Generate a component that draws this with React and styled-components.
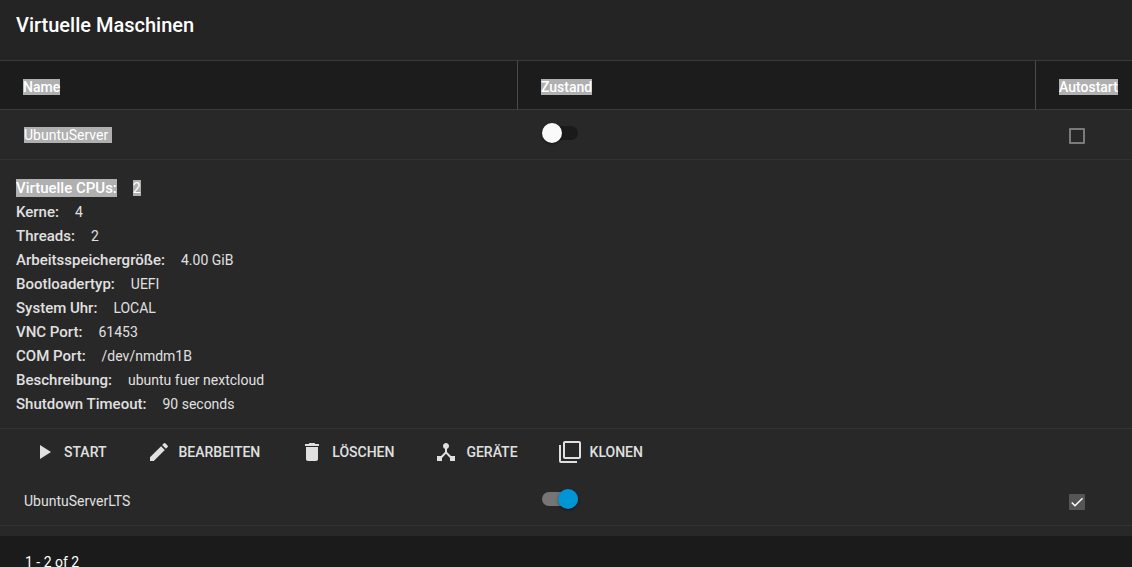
import React, { useState } from "react";
import styled, { createGlobalStyle } from "styled-components";
import { MdPlayArrow, MdEdit, MdDelete, MdDeviceHub, MdFilterNone } from "react-icons/md";

const vms = [
  {
    name: "UbuntuServer",
    running: false,
    autostart: false,
    expanded: true,
    selected: true,
    details: [
      ["Virtuelle CPUs:", "2"],
      ["Kerne:", "4"],
      ["Threads:", "2"],
      ["Arbeitsspeichergröße:", "4.00 GiB"],
      ["Bootloadertyp:", "UEFI"],
      ["System Uhr:", "LOCAL"],
      ["VNC Port:", "61453"],
      ["COM Port:", "/dev/nmdm1B"],
      ["Beschreibung:", "ubuntu fuer nextcloud"],
      ["Shutdown Timeout:", "90 seconds"],
    ],
  },
  { name: "UbuntuServerLTS", running: true, autostart: true, details: [] },
];

const actions = [
  { label: "START", icon: MdPlayArrow },
  { label: "BEARBEITEN", icon: MdEdit },
  { label: "LÖSCHEN", icon: MdDelete },
  { label: "GERÄTE", icon: MdDeviceHub },
  { label: "KLONEN", icon: MdFilterNone },
];

const VmRow = ({ vm }) => {
  const [running, setRunning] = useState(vm.running);
  const [autostart, setAutostart] = useState(vm.autostart);

  return (
    <>
      <tr>
        <Cell>
          <Text $selected={vm.selected}>{vm.selected ? vm.name + " " : vm.name}</Text>
        </Cell>
        <Cell>
          <Switch
            type="checkbox"
            role="switch"
            aria-label={"Zustand " + vm.name}
            checked={running}
            onChange={() => setRunning(!running)}
          />
        </Cell>
        <Cell $check>
          <CheckLabel>
            <Checkbox
              type="checkbox"
              aria-label={"Autostart " + vm.name}
              checked={autostart}
              onChange={() => setAutostart(!autostart)}
            />
            {autostart && (
              <CheckMark viewBox="0 0 24 24" aria-hidden="true">
                <path d="M4.1 12.7 9 17.6 20.3 6.3" />
              </CheckMark>
            )}
          </CheckLabel>
        </Cell>
      </tr>
      {vm.expanded && (
        <tr>
          <DetailCell colSpan={3}>
            <Details>
              {vm.details.map(([label, value], i) => (
                <Detail key={label}>
                  <dt>
                    <Text $selected={i === 0}>{label}</Text>
                  </dt>
                  <dd>
                    <Text $selected={i === 0}>{value}</Text>
                  </dd>
                </Detail>
              ))}
            </Details>
            <Actions>
              {actions.map(({ label, icon: Icon }) => (
                <ActionButton key={label} type="button">
                  <Icon size={24} />
                  {label}
                </ActionButton>
              ))}
            </Actions>
          </DetailCell>
        </tr>
      )}
    </>
  );
};

const App = () => {
  return (
    <Page>
      <GlobalStyle />
      <TitleBar>
        <h1>Virtuelle Maschinen</h1>
      </TitleBar>
      <Table>
        <colgroup>
          <col />
          <col />
          <AutostartCol />
        </colgroup>
        <thead>
          <tr>
            {["Name", "Zustand", "Autostart"].map((title) => (
              <HeadCell key={title} scope="col">
                <Text $selected>{title}</Text>
              </HeadCell>
            ))}
          </tr>
        </thead>
        <tbody>
          {vms.map((vm) => (
            <VmRow key={vm.name} vm={vm} />
          ))}
        </tbody>
      </Table>
      <Footer>1 - 2 of 2</Footer>
    </Page>
  );
};

export default App;

const GlobalStyle = createGlobalStyle`
  * {
    box-sizing: border-box;
  }
  body {
    margin: 0;
    background: #282828;
    color: #e0e0e0;
    font-family: Roboto, sans-serif;
    font-size: 14px;
  }
`;

const Page = styled.div`
  display: flex;
  flex-direction: column;
  height: 100vh;
  overflow: hidden;
`;

const TitleBar = styled.header`
  flex: none;
  padding: 13px 16px 23px;
  background: #242424;

  h1 {
    margin: 0;
    color: #fff;
    font-size: 20px;
    font-weight: 500;
    line-height: 24px;
  }
`;

const Table = styled.table`
  flex: none;
  width: 100%;
  margin-bottom: 10px;
  table-layout: fixed;
  border-collapse: separate;
  border-spacing: 0;
`;

const AutostartCol = styled.col`
  width: 96px;
`;

const HeadCell = styled.th`
  height: 50px;
  padding: 4px 0 0 23px;
  background: #1c1c1c;
  border-top: 1px solid #393939;
  border-bottom: 1px solid #393939;
  font-weight: 500;
  line-height: 16px;
  text-align: left;

  &:not(:last-child) {
    border-right: 1px solid #4a4a4a;
  }
`;

const Cell = styled.td`
  height: 50px;
  padding: ${(props) => (props.$check ? "2px 0 0 33px" : "0 0 0 24px")};
  border-bottom: 1px solid #323232;
  line-height: 16px;
  vertical-align: middle;
`;

const Text = styled.span`
  white-space: pre;
  color: ${(props) => (props.$selected ? "#fff" : "inherit")};
  background: ${(props) => (props.$selected ? "#b0b0b0" : "transparent")};
`;

const Switch = styled.input`
  appearance: none;
  display: flex;
  align-items: center;
  width: 36px;
  height: 14px;
  margin: 0 0 3px;
  border-radius: 7px;
  background: ${(props) => (props.checked ? "#757575" : "#1a1a1a")};
  cursor: pointer;

  &::before {
    content: "";
    flex: none;
    width: 20px;
    height: 20px;
    margin-left: ${(props) => (props.checked ? "16px" : "0")};
    border-radius: 50%;
    background: ${(props) => (props.checked ? "#0095d5" : "#fafafa")};
    box-shadow: 0 1px 3px rgba(0, 0, 0, 0.4);
  }
`;

const CheckLabel = styled.label`
  display: grid;
  width: 16px;
  height: 16px;

  & > * {
    grid-area: 1 / 1;
  }
`;

const Checkbox = styled.input`
  appearance: none;
  width: 16px;
  height: 16px;
  margin: 0;
  border: 2px solid ${(props) => (props.checked ? "#555" : "#7a7a7a")};
  border-radius: 1px;
  background: ${(props) => (props.checked ? "#555" : "transparent")};
`;

const CheckMark = styled.svg`
  width: 16px;
  height: 16px;
  fill: none;
  stroke: #fff;
  stroke-width: 2.2;
  pointer-events: none;
`;

const DetailCell = styled.td`
  padding: 0;
`;

const Details = styled.dl`
  margin: 0;
  padding: 16px 16px 12px;
  border-bottom: 1px solid #323232;
`;

const Detail = styled.div`
  display: flex;
  align-items: baseline;
  gap: 16px;
  line-height: 24px;

  dt {
    font-size: 15px;
    font-weight: 500;
  }
  dd {
    margin: 0;
  }
`;

const Actions = styled.div`
  display: flex;
  gap: 40px;
  padding: 11px 32px 12px;
`;

const ActionButton = styled.button`
  display: flex;
  align-items: center;
  gap: 8px;
  height: 24px;
  padding: 0;
  border: 0;
  background: none;
  color: inherit;
  font: 500 14px Roboto, sans-serif;
  cursor: pointer;
`;

const Footer = styled.footer`
  flex: 1 0 auto;
  padding: 18px 25px;
  background: #1b1b1b;
  color: #fff;
  line-height: 16px;
`;
